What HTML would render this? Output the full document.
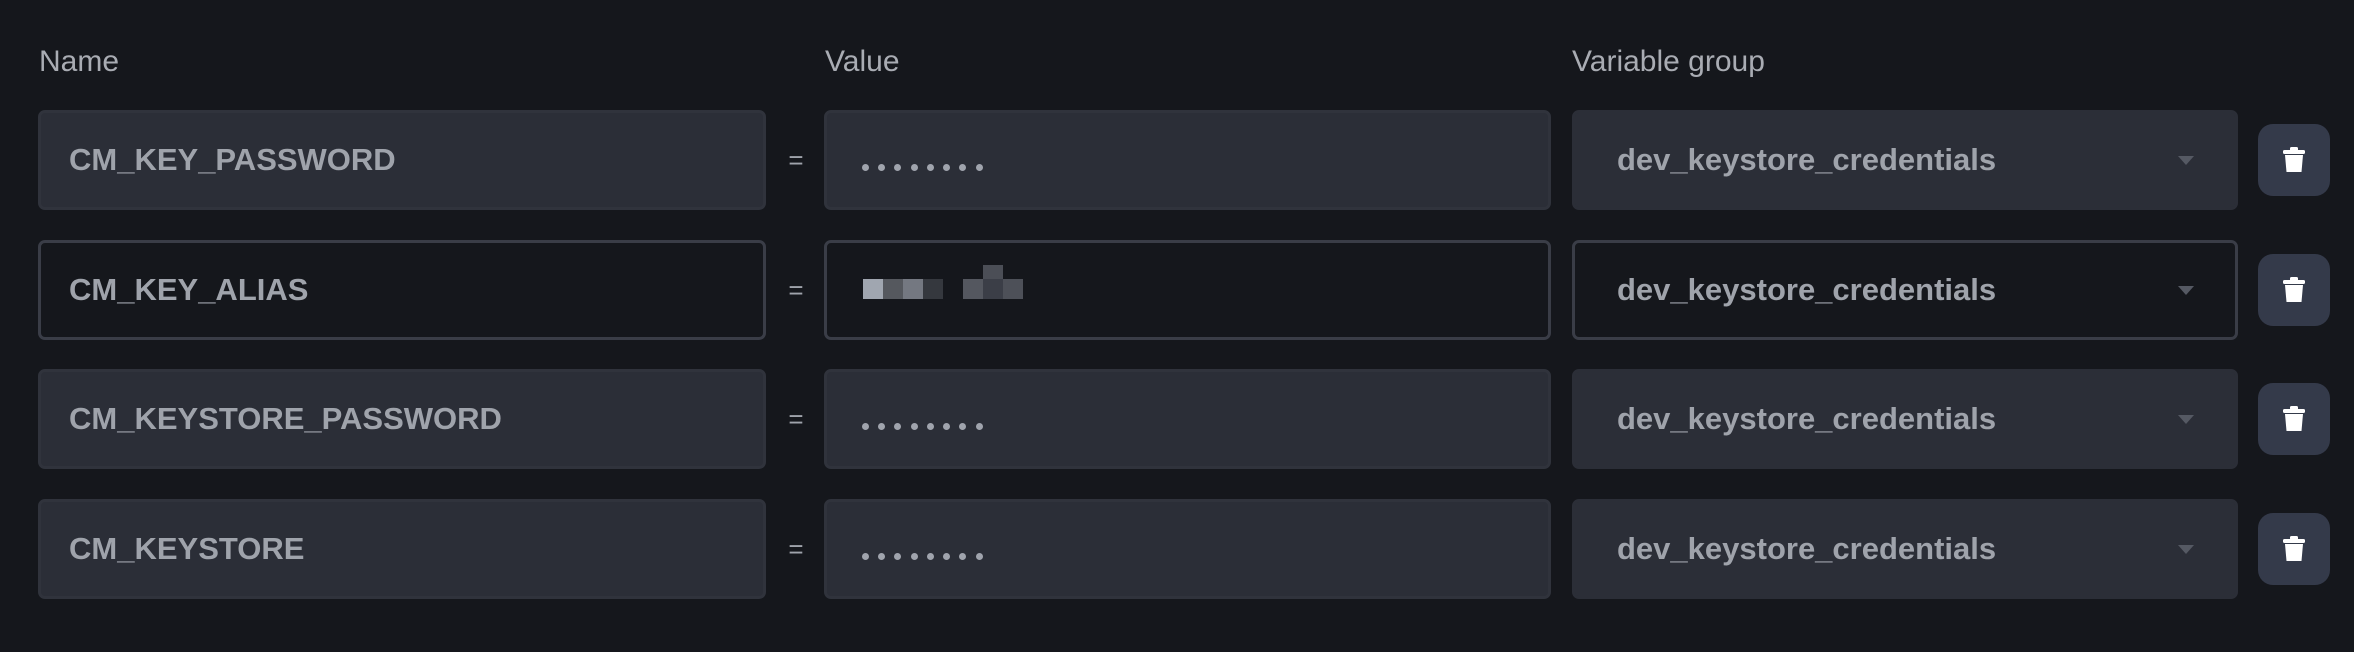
<!DOCTYPE html>
<html><head><style>
*{margin:0;padding:0;box-sizing:border-box}
body{width:2354px;height:652px;background:#15171c;font-family:"Liberation Sans",sans-serif;position:relative;overflow:hidden}
.lbl{position:absolute;top:45px;font-size:30px;color:#a9acb3}
.box{position:absolute;height:100px;border:3px solid #30333c;border-radius:7px;background:#2b2e37}
.box.dark{background:#15171c;border-color:#3a3d47}
.t{position:absolute;left:28px;top:0;line-height:94px;font-size:31px;font-weight:bold;color:#9fa3ab}
.eq{position:absolute;left:786px;width:20px;font-size:26px;color:#9fa3ab;text-align:center;line-height:100px}
.dots{position:absolute;left:35px;top:51px;height:8px;width:140px}
.dots i{position:absolute;top:0;width:7px;height:7px;border-radius:50%;background:#a0a4ad}
.arr{position:absolute;right:41px;top:43px;width:0;height:0;border-left:8px solid transparent;border-right:8px solid transparent;border-top:9px solid #555963}
.btn{position:absolute;left:2258px;width:72px;height:72px;border-radius:15px;background:#343a4a}
.btn svg{position:absolute;left:25px;top:23px}
.px{position:absolute;width:20px;height:20px}
</style></head><body>
<div class="lbl" style="left:39px">Name</div>
<div class="lbl" style="left:825px">Value</div>
<div class="lbl" style="left:1572px">Variable group</div>

<!-- row1 -->
<div class="box" style="left:38px;top:110px;width:728px"><div class="t">CM_KEY_PASSWORD</div></div>
<div class="eq" style="top:110px">=</div>
<div class="box" style="left:824px;top:110px;width:727px"><div class="dots"><i style="left:0"></i><i style="left:16px"></i><i style="left:32px"></i><i style="left:49px"></i><i style="left:65px"></i><i style="left:81px"></i><i style="left:97px"></i><i style="left:114px"></i></div></div>
<div class="box" style="left:1572px;top:110px;width:666px;border-color:#2b2e37"><div class="t" style="left:42px">dev_keystore_credentials</div><div class="arr"></div></div>
<div class="btn" style="top:124px"><svg width="22" height="26" viewBox="0 0 22 26"><rect x="0" y="3" width="22" height="4" rx="1.5" fill="#fff"/><rect x="7" y="0" width="8" height="4" rx="1.5" fill="#fff"/><path d="M2 8h18l-1.5 17h-15z" fill="#fff"/></svg></div>

<!-- row2 -->
<div class="box dark" style="left:38px;top:240px;width:728px"><div class="t">CM_KEY_ALIAS</div></div>
<div class="eq" style="top:240px">=</div>
<div class="box dark" style="left:824px;top:240px;width:727px"></div>
<div class="px" style="left:863px;top:279px;background:#a0a6b0"></div>
<div class="px" style="left:883px;top:279px;background:#55585e"></div>
<div class="px" style="left:903px;top:279px;background:#747881"></div>
<div class="px" style="left:923px;top:279px;background:#35383e"></div>
<div class="px" style="left:963px;top:279px;background:#54575f"></div>
<div class="px" style="left:983px;top:279px;background:#3b3e47"></div>
<div class="px" style="left:1003px;top:279px;background:#4d5058"></div>
<div class="px" style="left:983px;top:265px;height:14px;background:#4b4e56"></div>
<div class="box dark" style="left:1572px;top:240px;width:666px"><div class="t" style="left:42px">dev_keystore_credentials</div><div class="arr"></div></div>
<div class="btn" style="top:254px"><svg width="22" height="26" viewBox="0 0 22 26"><rect x="0" y="3" width="22" height="4" rx="1.5" fill="#fff"/><rect x="7" y="0" width="8" height="4" rx="1.5" fill="#fff"/><path d="M2 8h18l-1.5 17h-15z" fill="#fff"/></svg></div>

<!-- row3 -->
<div class="box" style="left:38px;top:369px;width:728px"><div class="t">CM_KEYSTORE_PASSWORD</div></div>
<div class="eq" style="top:369px">=</div>
<div class="box" style="left:824px;top:369px;width:727px"><div class="dots"><i style="left:0"></i><i style="left:16px"></i><i style="left:32px"></i><i style="left:49px"></i><i style="left:65px"></i><i style="left:81px"></i><i style="left:97px"></i><i style="left:114px"></i></div></div>
<div class="box" style="left:1572px;top:369px;width:666px;border-color:#2b2e37"><div class="t" style="left:42px">dev_keystore_credentials</div><div class="arr"></div></div>
<div class="btn" style="top:383px"><svg width="22" height="26" viewBox="0 0 22 26"><rect x="0" y="3" width="22" height="4" rx="1.5" fill="#fff"/><rect x="7" y="0" width="8" height="4" rx="1.5" fill="#fff"/><path d="M2 8h18l-1.5 17h-15z" fill="#fff"/></svg></div>

<!-- row4 -->
<div class="box" style="left:38px;top:499px;width:728px"><div class="t">CM_KEYSTORE</div></div>
<div class="eq" style="top:499px">=</div>
<div class="box" style="left:824px;top:499px;width:727px"><div class="dots"><i style="left:0"></i><i style="left:16px"></i><i style="left:32px"></i><i style="left:49px"></i><i style="left:65px"></i><i style="left:81px"></i><i style="left:97px"></i><i style="left:114px"></i></div></div>
<div class="box" style="left:1572px;top:499px;width:666px;border-color:#2b2e37"><div class="t" style="left:42px">dev_keystore_credentials</div><div class="arr"></div></div>
<div class="btn" style="top:513px"><svg width="22" height="26" viewBox="0 0 22 26"><rect x="0" y="3" width="22" height="4" rx="1.5" fill="#fff"/><rect x="7" y="0" width="8" height="4" rx="1.5" fill="#fff"/><path d="M2 8h18l-1.5 17h-15z" fill="#fff"/></svg></div>
</body></html>
